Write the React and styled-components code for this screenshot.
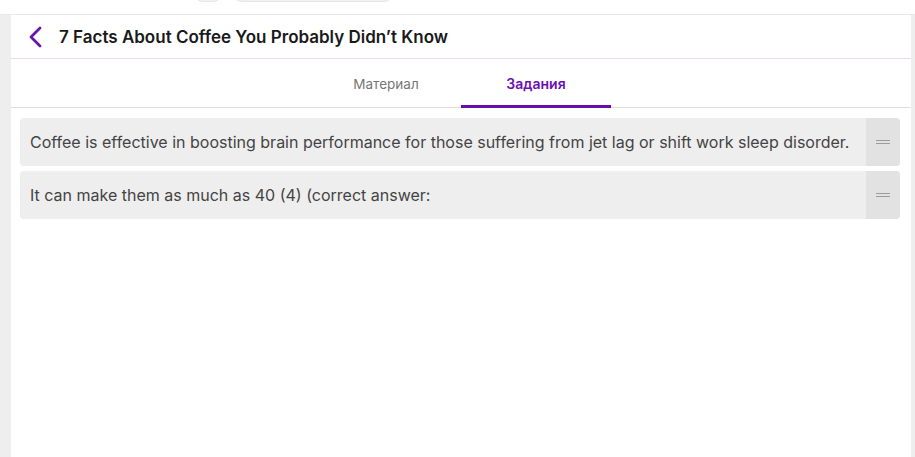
import React from "react";
import styled, { createGlobalStyle } from "styled-components";

const Global = createGlobalStyle`
  html, body { margin: 0; padding: 0; background: #fff; }
  body { font-family: Inter, "Noto Sans", sans-serif; }
  * { box-sizing: border-box; }
`;

const TopBar = styled.div`
  height: 15px;
  border-bottom: 1px solid #e8e8e8;
  display: flex;
  align-items: flex-start;
  gap: 9px;
  padding-left: 193px;
  overflow: hidden;
`;

const Pill = styled.div`
  width: ${(p) => p.$w}px;
  height: 30px;
  margin-top: -28px;
  border-radius: 10px;
  background: #f1f1f1;
  border: 1px solid #e6e6e6;
`;

const Shell = styled.div`
  display: flex;
  min-height: calc(100vh - 15px);
`;

const Gutter = styled.div`
  width: ${(p) => p.$w}px;
  background: #eeeeee;
  flex-shrink: 0;
`;

const Main = styled.div`
  flex: 1;
  display: flex;
  flex-direction: column;
  background: #fff;
`;

const Header = styled.div`
  height: 44px;
  display: flex;
  align-items: center;
  padding-left: 16px;
  gap: 16px;
  border-bottom: 1px solid #ecdaf6;
`;

const BackButton = styled.button`
  border: 0;
  background: none;
  padding: 0;
  width: 16px;
  height: 22px;
  display: flex;
  align-items: center;
  justify-content: center;
  cursor: pointer;
`;

const Title = styled.h1`
  margin: 0;
  font-size: 17px;
  font-weight: 600;
  color: #1a1a1a;
  letter-spacing: 0;
`;

const Tabs = styled.div`
  height: 49px;
  display: flex;
  justify-content: center;
  border-bottom: 1px solid #dedede;
`;

const Tab = styled.div`
  width: 150px;
  display: flex;
  align-items: center;
  justify-content: center;
  font-size: ${(p) => (p.$active ? 14 : 13.5)}px;
  font-weight: ${(p) => (p.$active ? 600 : 400)};
  color: ${(p) => (p.$active ? "#6c12b2" : "#777")};
  border-bottom: 3px solid ${(p) => (p.$active ? "#6a0dad" : "transparent")};
  margin-bottom: -1px;
  padding-top: 3px;
`;

const List = styled.div`
  display: flex;
  flex-direction: column;
  gap: 5px;
  padding: 10px 11px 10px 9px;
`;

const Card = styled.div`
  display: flex;
  height: 48px;
  border-radius: 4px;
  background: #eeeeee;
  overflow: hidden;
`;

const CardText = styled.div`
  flex: 1;
  display: flex;
  align-items: center;
  padding-left: 10px;
  font-size: 16px;
  color: #444;
`;

const Handle = styled.div`
  width: 34px;
  background: #e2e2e2;
  display: flex;
  align-items: center;
  justify-content: center;
`;

const Bars = styled.div`
  width: 14px;
  height: 4px;
  border-top: 1px solid #9c9c9c;
  border-bottom: 1px solid #9c9c9c;
`;

const items = [
  "Coffee is effective in boosting brain performance for those suffering from jet lag or shift work sleep disorder.",
  "It can make them as much as 40 (4) (correct answer:",
];

export default function App() {
  return (
    <>
      <Global />
      <TopBar>
        <Pill $w={30} />
        <Pill $w={162} />
      </TopBar>
      <Shell>
        <Gutter $w={11} />
        <Main>
          <Header>
            <BackButton aria-label="Назад">
              <svg width="14" height="22" viewBox="0 0 14 22" fill="none">
                <path d="M12 2 L3 11 L12 20" stroke="#6a14b0" strokeWidth="2.8" strokeLinecap="round" strokeLinejoin="round" />
              </svg>
            </BackButton>
            <Title>7 Facts About Coffee You Probably Didn’t Know</Title>
          </Header>
          <Tabs>
            <Tab>Материал</Tab>
            <Tab $active>Задания</Tab>
          </Tabs>
          <List>
            {items.map((t) => (
              <Card key={t}>
                <CardText>{t}</CardText>
                <Handle>
                  <Bars />
                </Handle>
              </Card>
            ))}
          </List>
        </Main>
        <Gutter $w={4} />
      </Shell>
    </>
  );
}
